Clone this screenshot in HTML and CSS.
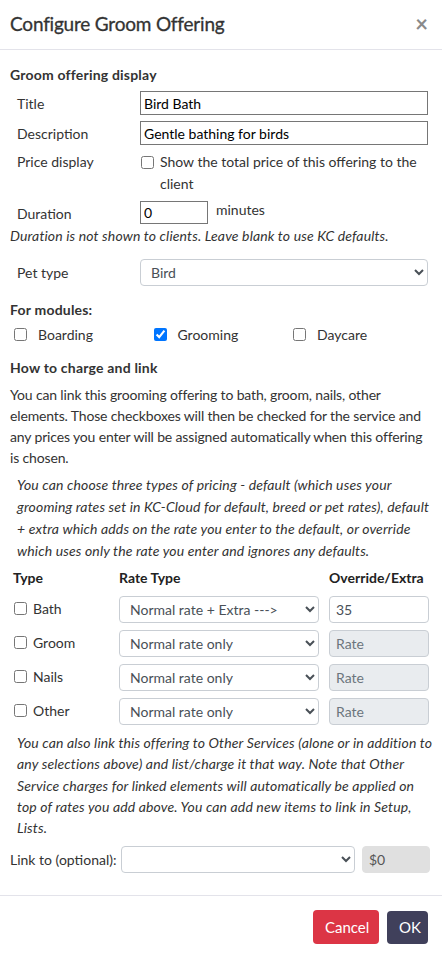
FILE: index.html
```html
<!DOCTYPE html>
<html>
<head>
<meta charset="utf-8">
<link rel="stylesheet" href="styles.css">
</head>
<body>
<div class="modal">
  <header class="modal-header">
    <h4 class="modal-title">Configure Groom Offering</h4>
    <button class="close" type="button">&times;</button>
  </header>
  <div class="modal-body">
    <h5 class="section first">Groom offering display</h5>
    <div class="frow r-title">
      <label class="flabel">Title</label>
      <input class="plain wide" type="text" value="Bird Bath">
    </div>
    <div class="frow r-desc">
      <label class="flabel">Description</label>
      <input class="plain wide" type="text" value="Gentle bathing for birds">
    </div>
    <div class="frow r-price">
      <label class="flabel">Price display</label>
      <label class="chk-wrap"><input type="checkbox" class="chk"><span>Show the total price of this offering to the client</span></label>
    </div>
    <div class="frow r-dur">
      <label class="flabel">Duration</label>
      <input class="plain short" type="text" value="0">
      <span class="unit">minutes</span>
    </div>
    <p class="note">Duration is not shown to clients. Leave blank to use KC defaults.</p>
    <div class="frow r-pet">
      <label class="flabel">Pet type</label>
      <select class="fselect wide"><option>Bird</option></select>
    </div>
    <h5 class="section mods">For modules:</h5>
    <div class="modules">
      <label class="mod"><input type="checkbox" class="chk"><span>Boarding</span></label>
      <label class="mod"><input type="checkbox" class="chk" checked><span>Grooming</span></label>
      <label class="mod"><input type="checkbox" class="chk"><span>Daycare</span></label>
    </div>
    <h5 class="section how">How to charge and link</h5>
    <p class="para">You can link this grooming offering to bath, groom, nails, other elements. Those checkboxes will then be checked for the service and any prices you enter will be assigned automatically when this offering is chosen.</p>
    <p class="ipara">You can choose three types of pricing - default (which uses your grooming rates set in KC-Cloud for default, breed or pet rates), default + extra which adds on the rate you enter to the default, or override which uses only the rate you enter and ignores any defaults.</p>
    <div class="rates">
      <div class="th">Type</div>
      <div class="th">Rate Type</div>
      <div class="th">Override/Extra</div>

      <label class="rl"><input type="checkbox" class="chk"><span>Bath</span></label>
      <select class="fselect rsel"><option>Normal rate + Extra ---&gt;</option></select>
      <input class="finput" type="text" value="35">

      <label class="rl"><input type="checkbox" class="chk"><span>Groom</span></label>
      <select class="fselect rsel"><option>Normal rate only</option></select>
      <input class="finput" type="text" placeholder="Rate" disabled>

      <label class="rl"><input type="checkbox" class="chk"><span>Nails</span></label>
      <select class="fselect rsel"><option>Normal rate only</option></select>
      <input class="finput" type="text" placeholder="Rate" disabled>

      <label class="rl"><input type="checkbox" class="chk"><span>Other</span></label>
      <select class="fselect rsel"><option>Normal rate only</option></select>
      <input class="finput" type="text" placeholder="Rate" disabled>
    </div>
    <p class="ipara bottom">You can also link this offering to Other Services (alone or in addition to any selections above) and list/charge it that way. Note that Other Service charges for linked elements will automatically be applied on top of rates you add above. You can add new items to link in Setup, Lists.</p>
    <div class="link-row">
      <label class="link-label">Link to (optional):</label>
      <select class="fselect link-sel"><option></option></select>
      <input class="price" type="text" value="$0" disabled>
    </div>
  </div>
  <footer class="modal-footer">
    <button class="btn btn-cancel" type="button">Cancel</button>
    <button class="btn btn-ok" type="button">OK</button>
  </footer>
</div>
</body>
</html>
```

FILE: styles.css
```css
* { box-sizing: border-box; }
html, body { margin: 0; padding: 0; background: #fff; }
body {
  font-family: Lato, "Liberation Sans", sans-serif;
  font-size: 14px;
  line-height: 21px;
  color: #333;
}
.modal { width: 442px; }

.modal-header {
  height: 50px;
  display: flex;
  align-items: center;
  justify-content: space-between;
  padding: 0 14px 2px 10px;
  border-bottom: 1px solid #e3e3ea;
}
.modal-title {
  margin: 0;
  font-size: 19px;
  font-weight: 400;
  color: #333;
  letter-spacing: -0.2px;
  -webkit-text-stroke: 0.3px #333;
}
.close {
  border: 0;
  background: none;
  padding: 0;
  font-family: Lato, sans-serif;
  font-size: 22px;
  font-weight: 700;
  color: #8a8a8a;
  line-height: 1;
}

.modal-body { padding: 0 9px 0 10px; }
.section {
  margin: 0;
  font-size: 14px;
  font-weight: 700;
  color: #333;
  line-height: 21px;
  letter-spacing: 0.2px;
}
.section.first { margin-top: 14px; }

.frow {
  display: flex;
  align-items: center;
  padding-left: 7px;
  margin-top: 6px;
}
.flabel { width: 123px; flex: none; color: #333; }
.plain {
  height: 24px;
  border: 1px solid #767676;
  border-radius: 0;
  padding: 0 3px;
  font-family: Lato, sans-serif;
  font-size: 14px;
  color: #000;
  background: #fff;
}
.wide { width: 288px; }
.short { width: 68px; height: 23px; }
.unit { margin-left: 8px; align-self: flex-start; margin-top: -2px; }
.r-dur .flabel { margin-top: 2px; }

.r-price { align-items: flex-start; }
.r-price .flabel { line-height: 22px; }
.chk-wrap { display: flex; align-items: flex-start; line-height: 22px; width: 280px; }
.chk { margin: 0; width: 13px; height: 13px; flex: none; }
.chk-wrap .chk { margin: 5px 6px 0 1px; }

.note {
  margin: 1px 0 0;
  font-style: italic;
  color: #333;
  letter-spacing: 0.14px;
}

.r-pet { margin-top: 13px; }
.fselect {
  height: 27px;
  border: 1px solid #c9ced4;
  border-radius: 4px;
  background: #fff;
  padding: 0 6px;
  font-family: Lato, sans-serif;
  font-size: 14px;
  color: #495057;
}

.section.mods { margin-top: 13px; }
.modules {
  display: flex;
  margin-top: 4px;
  padding-left: 4px;
  line-height: 21px;
}
.mod { display: flex; align-items: center; width: 139.5px; }
.mod .chk { margin-right: 11px; }

.section.how { margin-top: 12px; }
.para { margin: 6px 0 0; letter-spacing: -0.15px; }
.ipara {
  margin: 6px 0 0;
  padding-left: 7px;
  font-style: italic;
  line-height: 22px;
  letter-spacing: 0.14px;
}

.rates {
  display: grid;
  grid-template-columns: 106px 210px 100px;
  row-gap: 7px;
  align-items: center;
  margin-top: 5px;
  padding-left: 3px;
}
.th { font-weight: 700; color: #222; line-height: 21px; margin-bottom: 1px; }
.rl { display: flex; align-items: center; align-self: start; margin-top: 2px; }
.rl .chk { margin: 0 6px 0 1px; }
.rsel { width: 200px; }
.finput {
  width: 100px;
  height: 27px;
  border: 1px solid #c9ced4;
  border-radius: 4px;
  padding: 0 6px;
  font-family: Lato, sans-serif;
  font-size: 14px;
  color: #495057;
  background: #fff;
}
.finput:disabled { background: #e9ecef; }
.finput::placeholder { color: #6c757d; }

.ipara.bottom { margin-top: 7px; line-height: 21.3px; }

.link-row {
  display: flex;
  align-items: center;
  margin-top: 8px;
}
.link-label { width: 111px; flex: none; }
.link-sel { width: 234px; }
.price {
  width: 68px;
  height: 27px;
  margin-left: 7px;
  border: 1px solid #e0e0e0;
  border-radius: 4px;
  background: #e0e0e0;
  padding: 0 6px;
  font-family: Lato, sans-serif;
  font-size: 14px;
  color: #555;
}

.modal-footer {
  margin-top: 22px;
  border-top: 1px solid #e3e3ea;
  display: flex;
  justify-content: flex-end;
  align-items: center;
  gap: 8px;
  padding: 14px 14px 0 0;
}
.btn {
  border: 0;
  border-radius: 4px;
  color: #fff;
  font-family: Lato, sans-serif;
  font-size: 15px;
  height: 33px;
  padding: 0 12px;
}
.btn-cancel { background: #dc3545; width: 66px; height: 34px; }
.btn-ok { background: #40405b; width: 41px; }
```
